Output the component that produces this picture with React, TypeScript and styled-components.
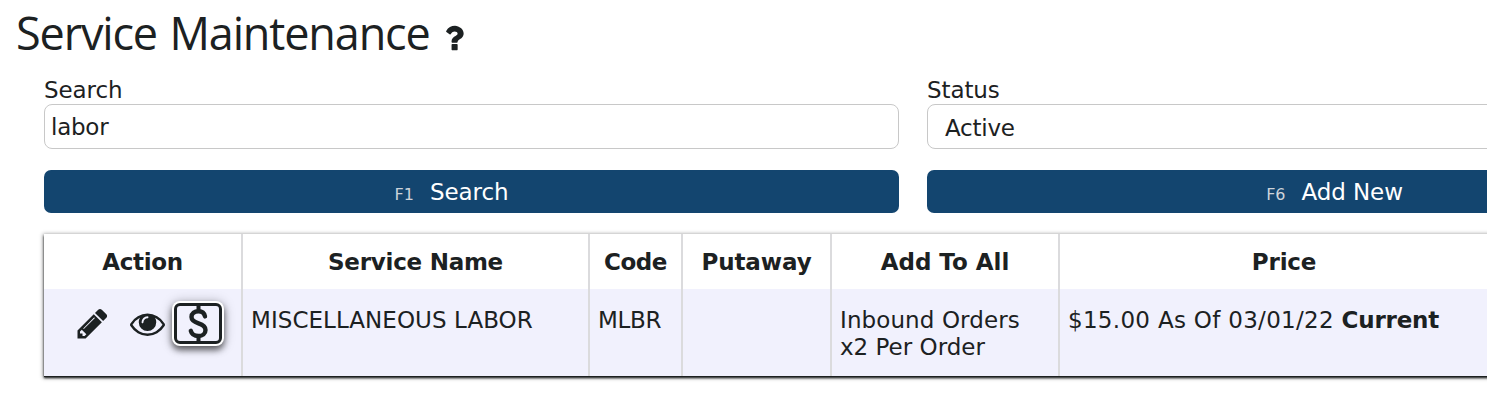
import React from "react";
import styled, { createGlobalStyle } from "styled-components";

const Global = createGlobalStyle`
  * { box-sizing: border-box; }
  body {
    margin: 0;
    background: #fff;
    color: #1c2122;
    font-family: "DejaVu Sans", Verdana, sans-serif;
    font-size: 23px;
    line-height: 27px;
  }
`;

const Viewport = styled.div`
  width: 100%;
  height: 403px;
  overflow: hidden;
`;

const Page = styled.main`
  width: 1770px;
  padding-left: 44px;
`;

const Title = styled.h1`
  display: flex;
  align-items: center;
  margin: 0 0 0 -28px;
  height: 76px;
  padding-bottom: 10px;
  font: 400 45px/60px "Open Sans", "Segoe UI", sans-serif;
  word-spacing: 2px;
`;

const Spaced = styled.span<{ $track?: number }>`
  letter-spacing: ${(p) => p.$track ?? 0}px;
`;

const HelpIcon = styled.svg`
  width: 34px;
  height: 34px;
  margin-left: 7px;
  margin-top: 10px;
  fill: currentColor;
`;

const FormGrid = styled.div`
  display: grid;
  grid-template-columns: 855px 855px;
  column-gap: 28px;
`;

const Field = styled.label`
  display: flex;
  flex-direction: column;
  height: 94px;
`;

const FieldLabel = styled.span`
  height: 28px;
  line-height: 28px;
  letter-spacing: -0.1px;
`;

const Control = styled.span<{ $indent: number; $drop?: number }>`
  display: flex;
  align-items: center;
  height: 45px;
  padding-top: ${(p) => p.$drop ?? 0}px;
  padding-left: ${(p) => p.$indent}px;
  border: 1px solid #c8c8c8;
  border-radius: 8px;
  letter-spacing: -0.25px;
`;

const Button = styled.button`
  display: flex;
  align-items: baseline;
  justify-content: center;
  gap: 16px;
  height: 43px;
  padding: 9px 40px 0 0;
  border: 0;
  border-radius: 7px;
  background: #13456f;
  color: #fff;
  font: inherit;
`;

const KeyHint = styled.small`
  color: #ccd3da;
  font-size: 16px;
`;

const Table = styled.div`
  margin-top: 21px;
  width: 1710px;
  background: #fff;
  box-shadow:
    0 1px 0 0 #1c2020,
    0 2px 2px 0 #1c2020,
    0 1px 4px 1px rgba(0, 0, 0, 0.4);
`;

const Row = styled.div<{ $head?: boolean }>`
  display: grid;
  grid-template-columns: 199px 347px 93px 149px 228px 450px 1fr;
  height: ${(p) => (p.$head ? 55 : 87)}px;
  background: ${(p) => (p.$head ? "#fff" : "#f1f1fd")};
  font-weight: ${(p) => (p.$head ? 700 : 400)};
`;

const HeadCell = styled.div`
  display: flex;
  align-items: center;
  justify-content: center;
  padding-top: 2px;
  border-right: 2px solid #dbdbdd;
`;

const Cell = styled.div`
  padding: 18px 8px 0;
  border-right: 2px solid #dbdbdd;
  white-space: nowrap;
`;

const ActionCell = styled(Cell)`
  display: flex;
  align-items: flex-start;
  padding: 11px 0 0 31px;
`;

const ActionIcon = styled.svg<{ $gap: number; $drop: number }>`
  flex: none;
  width: 35px;
  height: 35px;
  margin-top: ${(p) => p.$drop}px;
  margin-right: ${(p) => p.$gap}px;
  fill: currentColor;
`;

const PriceButton = styled.span`
  flex: none;
  display: block;
  width: 52px;
  height: 45px;
  margin-top: 1px;
  padding: 2px;
  border-radius: 8px;
  background: #fff;
  box-shadow: 0 4px 6px rgba(0, 0, 0, 0.55), 0 1px 12px rgba(0, 0, 0, 0.28);
`;

const PriceIcon = styled.svg`
  display: block;
  width: 48px;
  height: 41px;
`;

export default function App() {
  return (
    <Viewport>
      <Global />
      <Page>
        <Title>
          <Spaced $track={-1.15}>Service Maintenance</Spaced>
          <HelpIcon viewBox="0 0 1792 1792">
            <path d="M1088 1256v240q0 16-12 28t-28 12h-240q-16 0-28-12t-12-28v-240q0-16 12-28t28-12h240q16 0 28 12t12 28zm316-600q0 54-15.500 101t-35 76.500-55 59.500-57.500 43.500-61 35.500q-41 23-68.500 65t-27.500 67q0 17-12 32.500t-28 15.500h-240q-15 0-25.500-18.500t-10.500-37.500v-45q0-83 65-156.500t143-108.500q59-27 84-56t25-76q0-42-46.500-74t-107.500-32q-65 0-108 29-35 25-107 115-13 16-31 16-12 0-25-8l-164-125q-13-10-15.500-25t5.500-28q160-266 464-266 80 0 161 31t146 83 106 127.500 41 158.500z" />
          </HelpIcon>
        </Title>
        <FormGrid>
          <Field>
            <FieldLabel>Search</FieldLabel>
            <Control $indent={6} $drop={1}>labor</Control>
          </Field>
          <Field>
            <FieldLabel>Status</FieldLabel>
            <Control $indent={17} $drop={3}>Active</Control>
          </Field>
          <Button>
            <KeyHint>F1</KeyHint>
            <Spaced $track={-0.1}>Search</Spaced>
          </Button>
          <Button>
            <KeyHint>F6</KeyHint>
            <Spaced $track={-0.1}>Add New</Spaced>
          </Button>
        </FormGrid>
        <Table>
          <Row $head>
            <HeadCell><Spaced $track={-0.35}>Action</Spaced></HeadCell>
            <HeadCell><Spaced $track={-0.25}>Service Name</Spaced></HeadCell>
            <HeadCell><Spaced $track={-0.4}>Code</Spaced></HeadCell>
            <HeadCell><Spaced $track={-0.1}>Putaway</Spaced></HeadCell>
            <HeadCell><Spaced>Add To All</Spaced></HeadCell>
            <HeadCell><Spaced $track={-0.2}>Price</Spaced></HeadCell>
            <HeadCell />
          </Row>
          <Row>
            <ActionCell>
              <ActionIcon viewBox="0 0 1792 1792" $gap={20} $drop={6}>
                <path d="M491 1536l91-91-235-235-91 91v107h128v128h107zm523-928q0-22-22-22-10 0-17 7l-542 542q-7 7-7 17 0 22 22 22 10 0 17-7l542-542q7-7 7-17zm-54-192l416 416-832 832h-416v-416zm683 96q0 53-37 90l-166 166-416-416 166-165q36-38 90-38 53 0 91 38l235 234q37 39 37 91z" />
              </ActionIcon>
              <ActionIcon viewBox="0 0 1792 1792" $gap={7} $drop={6}>
                <path d="M1664 960q-152-236-381-353 61 104 61 225 0 185-131.500 316.500t-316.500 131.500-316.500-131.500-131.500-316.500q0-121 61-225-229 117-381 353 133 205 333.500 326.500t434.500 121.500 434.500-121.500 333.500-326.500zm-720-384q0-20-14-34t-34-14q-125 0-214.500 89.500t-89.500 214.500q0 20 14 34t34 14 34-14 14-34q0-86 61-147t147-61q20 0 34-14t14-34zm848 384q0 34-20 69-140 230-376.500 368.500t-499.500 138.500-499.500-139-376.500-368q-20-35-20-69t20-69q140-229 376.500-368t499.500-139 499.500 139 376.500 368q20 35 20 69z" />
              </ActionIcon>
              <PriceButton>
                <PriceIcon viewBox="0 0 48 41" fill="none" stroke="#1c2122">
                  <rect x="1.5" y="1.5" width="45" height="38" rx="4.500" fill="#f1f1fd" strokeWidth="3" />
                  <path
                    d="M31 13.400C30.300 9.800 27.800 8.200 24.500 8.200C20.500 8.200 17.500 10.500 17.500 14C17.500 17.600 20.500 19 24.500 20.300C28.700 21.600 31.500 23.200 31.500 26.900C31.500 30.700 28.500 33 24.500 33C20.600 33 17.600 31.200 16.800 27.800"
                    strokeWidth="4.400"
                    strokeLinecap="round"
                  />
                  <path d="M24.500 2v6M24.500 33v6" strokeWidth="4" />
                </PriceIcon>
              </PriceButton>
            </ActionCell>
            <Cell><Spaced $track={0.05}>MISCELLANEOUS LABOR</Spaced></Cell>
            <Cell><Spaced $track={-0.3}>MLBR</Spaced></Cell>
            <Cell />
            <Cell>
              <Spaced $track={0.1}>Inbound Orders</Spaced>
              <br />
              <Spaced>x2 Per Order</Spaced>
            </Cell>
            <Cell>
              <Spaced $track={0.3}>$15.00 As Of 03/01/22 </Spaced>
              <Spaced as="b" $track={-0.2}>Current</Spaced>
            </Cell>
            <Cell />
          </Row>
        </Table>
      </Page>
    </Viewport>
  );
}
